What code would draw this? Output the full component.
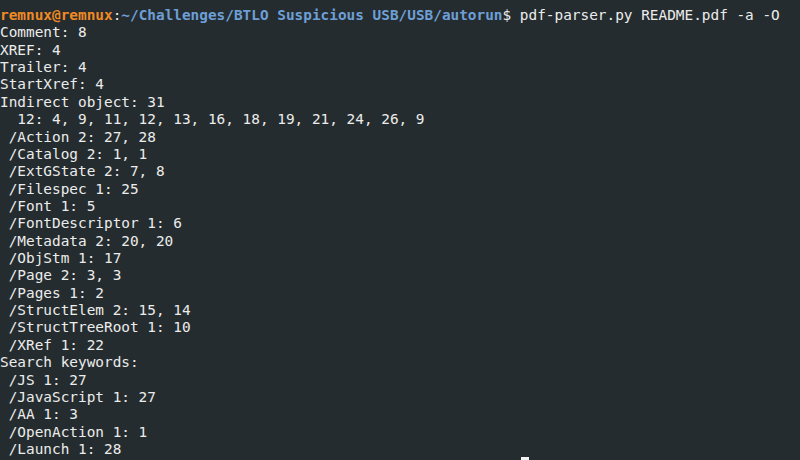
const lines = [
  'Comment: 8',
  'XREF: 4',
  'Trailer: 4',
  'StartXref: 4',
  'Indirect object: 31',
  '  12: 4, 9, 11, 12, 13, 16, 18, 19, 21, 24, 26, 9',
  ' /Action 2: 27, 28',
  ' /Catalog 2: 1, 1',
  ' /ExtGState 2: 7, 8',
  ' /Filespec 1: 25',
  ' /Font 1: 5',
  ' /FontDescriptor 1: 6',
  ' /Metadata 2: 20, 20',
  ' /ObjStm 1: 17',
  ' /Page 2: 3, 3',
  ' /Pages 1: 2',
  ' /StructElem 2: 15, 14',
  ' /StructTreeRoot 1: 10',
  ' /XRef 1: 22',
  'Search keywords:',
  ' /JS 1: 27',
  ' /JavaScript 1: 27',
  ' /AA 1: 3',
  ' /OpenAction 1: 1',
  ' /Launch 1: 28',
];

export default function App() {
  return (
    <div className="relative w-[800px] h-[460px] overflow-hidden bg-[#252c2f] pt-[7px] font-['DejaVu_Sans_Mono',monospace] text-[14.4px] leading-[17.36px] text-[#ececec]">
      <div className="whitespace-pre">
        <span className="font-bold text-[#f08a24]">remnux@remnux</span>
        <span>:</span>
        <span className="font-bold text-[#6d9fd6]">~/Challenges/BTLO Suspicious USB/USB/autorun</span>
        <span>$ pdf-parser.py README.pdf -a -O</span>
      </div>
      {lines.map((l, i) => (
        <div key={i} className="whitespace-pre">
          {l}
        </div>
      ))}
      <div className="absolute left-[521px] top-[457px] w-[8px] h-[4px] bg-[#f2f2f2]" />
    </div>
  );
}
